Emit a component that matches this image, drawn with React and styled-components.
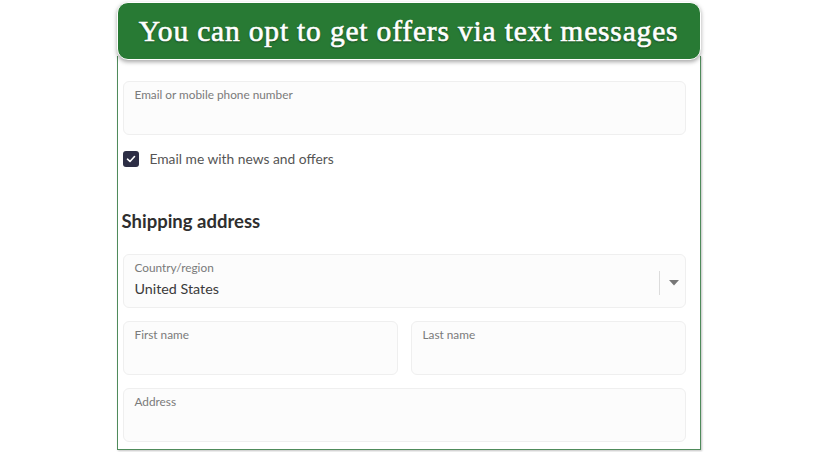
import styled, { createGlobalStyle } from 'styled-components'

const Global = createGlobalStyle`
  body {
    margin: 0;
    background: #fff;
    font-family: Lato, "Noto Sans", sans-serif;
  }
`

const Page = styled.div`
  width: 814px;
  height: 452px;
  overflow: hidden;
  display: flex;
  justify-content: center;
  padding-left: 3px;
  box-sizing: border-box;
`

const Shot = styled.div`
  width: 584px;
  height: 450px;
  box-sizing: border-box;
  display: flex;
  flex-direction: column;
  padding-top: 2px;
`

const Banner = styled.div`
  position: relative;
  z-index: 2;
  height: 56px;
  background: #287a34;
  border: 1.5px solid #fff;
  border-radius: 11px;
  box-shadow: 0 2px 4px rgba(0, 0, 0, 0.35);
  display: flex;
  align-items: center;
  justify-content: center;

  h1 {
    margin: 0;
    color: #fff;
    font-family: "Liberation Serif", serif;
    font-weight: 400;
    font-size: 29.5px;
    letter-spacing: 0.82px;
    -webkit-text-stroke: 0.6px #fff;
    text-shadow: 0 1px 2px rgba(0, 0, 0, 0.5);
  }
`

const Frame = styled.div`
  flex: 1;
  margin-top: -4px;
  border: 1.5px solid #4f8b5b;
  border-top: none;
  box-shadow: 1px 1px 2px rgba(0, 0, 0, 0.25);
  padding: 25px 14px 7px 5px;
  display: flex;
  flex-direction: column;
  gap: 13px;
`

const Field = styled.div`
  flex: 1;
  height: 54px;
  box-sizing: border-box;
  border: 1px solid #efefef;
  border-radius: 6px;
  background: #fcfcfc;
  padding: 5px 11px;
  display: flex;
  align-items: flex-start;
  justify-content: space-between;
`

const Label = styled.div`
  font-size: 11.8px;
  color: #7a7a7a;
  line-height: 16px;
`

const Value = styled.div`
  font-size: 14.3px;
  color: #3a3a3a;
  margin-top: 4px;
`

const Row = styled.div`
  display: flex;
  gap: 13px;
`

const Check = styled.label`
  display: flex;
  align-items: center;
  gap: 11px;
  margin-top: 2px;
  font-size: 13.8px;
  color: #555;
`

const Box = styled.span`
  width: 16px;
  height: 16px;
  border-radius: 3px;
  background: #2d2e45;
  display: flex;
  align-items: center;
  justify-content: center;
`

const Heading = styled.h2`
  margin: 30px 0 9px -1px;
  font-size: 18.5px;
  line-height: 22px;
  font-weight: 700;
  color: #2f2f2f;
`

const Select = styled.div`
  display: flex;
  align-items: center;
  align-self: center;
  height: 24px;
  margin-right: -5px;
  margin-top: 4px;

  span {
    width: 1px;
    height: 24px;
    background: #dcdcdc;
    margin-right: 9px;
  }
`

export default function App() {
  return (
    <Page>
      <Global />
      <Shot>
        <Banner>
          <h1>You can opt to get offers via text messages</h1>
        </Banner>
        <Frame>
          <Field>
            <Label>Email or mobile phone number</Label>
          </Field>
          <Check>
            <Box>
              <svg width="10" height="10" viewBox="0 0 10 10">
                <path d="M1.5 5.2 L4 7.5 L8.5 2.5" fill="none" stroke="#fff" strokeWidth="1.6" strokeLinecap="round" strokeLinejoin="round" />
              </svg>
            </Box>
            Email me with news and offers
          </Check>
          <Heading>Shipping address</Heading>
          <Field>
            <div>
              <Label>Country/region</Label>
              <Value>United States</Value>
            </div>
            <Select>
              <span />
              <svg width="10" height="6" viewBox="0 0 10 6">
                <path d="M0 0 H10 L5 5.5 Z" fill="#777" />
              </svg>
            </Select>
          </Field>
          <Row>
            <Field>
              <Label>First name</Label>
            </Field>
            <Field>
              <Label>Last name</Label>
            </Field>
          </Row>
          <Field>
            <Label>Address</Label>
          </Field>
        </Frame>
      </Shot>
    </Page>
  )
}
